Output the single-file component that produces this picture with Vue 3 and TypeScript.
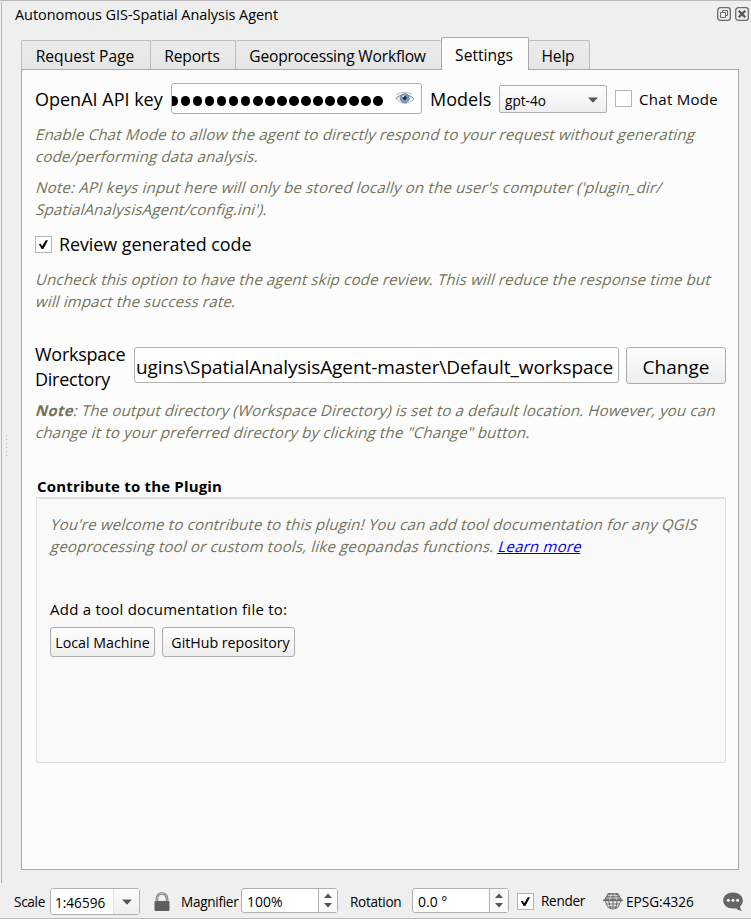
<script setup lang="ts">
import { ref } from 'vue'

interface Tab {
  label: string
  key: string
}

const tabs: Tab[] = [
  { label: 'Request Page', key: 'request' },
  { label: 'Reports', key: 'reports' },
  { label: 'Geoprocessing Workflow', key: 'workflow' },
  { label: 'Settings', key: 'settings' },
  { label: 'Help', key: 'help' },
]
const active = ref<string>('settings')
const chatMode = ref<boolean>(false)
const review = ref<boolean>(true)
const render = ref<boolean>(true)
const maskedLength = 18
</script>

<template>
  <div class="window">
    <div class="dock">
      <div class="grip"><i v-for="n in 6" :key="n"></i></div>
      <div class="dock-main">
        <header class="title">
          <span class="title-text">Autonomous GIS-Spatial Analysis Agent</span>
          <span class="title-icons">
            <svg width="14" height="14" viewBox="0 0 14 14" fill="none" stroke="#6b6b67">
              <rect x=".7" y=".7" width="12.6" height="12.6" rx="2.6" stroke-width="1.3" />
              <path d="M5.5 5V3.5h5v5H9M3.5 5.5h5v5h-5z" />
            </svg>
            <svg width="14" height="14" viewBox="0 0 14 14" fill="none" stroke="#6b6b67">
              <rect x=".7" y=".7" width="12.6" height="12.6" rx="2.6" stroke-width="1.3" />
              <path d="M3.8 3.8l6.4 6.4M10.2 3.8l-6.4 6.4" stroke="#555551" stroke-width="2.3" />
            </svg>
          </span>
        </header>

        <nav class="tabs">
          <button
            v-for="t in tabs"
            :key="t.key"
            :class="['tab', t.key, { active: active === t.key }]"
            @click="active = t.key"
          ><span>{{ t.label }}</span></button>
        </nav>

        <main class="panel">
          <div class="api-row">
            <span class="api-label">OpenAI API key</span>
            <div class="field key-field">
              <span class="dots"><i v-for="n in maskedLength" :key="n"></i></span>
              <svg class="eye" width="20" height="15" viewBox="0 0 20 15">
                <path d="M1 7.8C5 2.6 14 2 19 8c-5 5.800-13 6-18-.2z" fill="#f1f1f1" stroke="#b4b4b4" stroke-width=".8" />
                <path d="M1.500 3.800C6 .6 13 .3 17.500 3.500" fill="none" stroke="#c2bfbc" stroke-width="1.200" />
                <path d="M1 7.500C5 2.600 14 2.300 19 7.800" fill="none" stroke="#8d8d8d" stroke-width="1" />
                <circle cx="9.700" cy="7.200" r="4.500" fill="#7d9dc4" stroke="#5d7ca5" stroke-width=".8" />
                <circle cx="9.700" cy="7" r="2" fill="#1d2636" />
                <circle cx="8.300" cy="5.300" r="1" fill="#dce8f5" />
              </svg>
            </div>
            <span class="models-label">Models</span>
            <div class="combo">
              <span>gpt-4o</span>
              <svg width="10" height="6" viewBox="0 0 10 6"><path d="M0 .5h10L5 5.700z" fill="#555" /></svg>
            </div>
            <label class="check chat" @click="chatMode = !chatMode">
              <span class="box"></span><span class="chat-text">Chat Mode</span>
            </label>
          </div>

          <p class="note n1"><span class="a">Enable Chat Mode to allow the agent to directly respond to your request without generating</span><span class="b">code/performing data analysis.</span></p>
          <p class="note n2"><span class="a">Note: API keys input here will only be stored locally on the user's computer ('plugin_dir/</span><span class="b">SpatialAnalysisAgent/config.ini').</span></p>

          <label class="check review" @click="review = !review">
            <span class="box">
              <svg v-if="review" width="17" height="17" viewBox="0 0 17 17"><path d="M3.200 8.300l2.200-.6 1.500 2.700 4.300-6.700h2.400L8.300 13.700H6.500z" fill="#000" /></svg>
            </span>
            <span>Review generated code</span>
          </label>

          <p class="note n3"><span class="a">Uncheck this option to have the agent skip code review. This will reduce the response time but</span><span class="b">will impact the success rate.</span></p>

          <div class="dir-row">
            <div class="dir-label"><span>Workspace</span><br /><span>Directory</span></div>
            <div class="field dir-field"><span>ugins\SpatialAnalysisAgent-master\Default_workspace</span></div>
            <button class="btn change"><span>Change</span></button>
          </div>

          <p class="note n4"><span class="a"><b>Note</b>: The output directory (Workspace Directory) is set to a default location. However, you can</span><span class="b">change it to your preferred directory by clicking the "Change" button.</span></p>

          <h2>Contribute to the Plugin</h2>
          <section class="group">
            <p class="note n5"><span class="a">You're welcome to contribute to this plugin! You can add tool documentation for any QGIS</span><span class="b">geoprocessing tool or custom tools, like geopandas functions. <a>Learn more</a></span></p>
            <div class="add-label">Add a tool documentation file to:</div>
            <div class="buttons">
              <button class="btn local"><span>Local Machine</span></button>
              <button class="btn github"><span>GitHub repository</span></button>
            </div>
          </section>
        </main>
      </div>
    </div>

    <footer class="status">
      <span class="s-scale">Scale</span>
      <div class="scale-combo">
        <span class="val">1:46596</span>
        <span class="drop"><svg width="10" height="6" viewBox="0 0 10 6"><path d="M0 .5h10L5 5.700z" fill="#555" /></svg></span>
      </div>
      <svg class="lock" width="16" height="20" viewBox="0 0 16 20">
        <path d="M3 11V6.500a5 5 0 0 1 10 0V11" fill="none" stroke="#777" stroke-width="2.600" />
        <path d="M3 11V6.500a5 5 0 0 1 10 0V11" fill="none" stroke="#d9d9d9" stroke-width=".8" />
        <rect x=".5" y="9" width="15" height="10" rx="1" fill="#5f5f5f" />
      </svg>
      <span class="s-mag">Magnifier</span>
      <div class="spin">
        <span class="val">100%</span>
        <span class="arrows"><svg width="8" height="15" viewBox="0 0 8 15"><path d="M0 5h8L4 .5zM0 10h8l-4 4.500z" fill="#555" /></svg></span>
      </div>
      <span class="s-rot">Rotation</span>
      <div class="spin rot">
        <span class="val">0.0 °</span>
        <span class="arrows"><svg width="8" height="15" viewBox="0 0 8 15"><path d="M0 5h8L4 .5zM0 10h8l-4 4.500z" fill="#555" /></svg></span>
      </div>
      <label class="check render" @click="render = !render">
        <span class="box">
          <svg v-if="render" width="17" height="17" viewBox="0 0 17 17"><path d="M3.200 8.300l2.200-.6 1.500 2.700 4.300-6.700h2.400L8.300 13.700H6.500z" fill="#000" /></svg>
        </span>
        <span>Render</span>
      </label>
      <svg class="globe" width="20" height="18" viewBox="0 0 20 18" fill="none" stroke="#707070">
        <path d="M5 1h10l4.500 7.500h-19z" fill="#777" stroke="none" />
        <path d="M2.500 8.500C3 13.500 6 17 10 17s7-3.500 7.500-8.500M10 1v16M7 1C5.500 6 5.500 12 8 17M13 1c1.500 5 1.500 11-1 16M3.500 12h13M5.500 15h9" stroke-width="1.100" />
        <path d="M0 8.500h20" stroke-width="1.400" />
        <path d="M3.500 6h13M5 3.500h10M8.500 1.500C7 4 6.500 6 6.500 8M11.500 1.500C13 4 13.500 6 13.500 8" stroke="#dedede" stroke-width=".8" />
      </svg>
      <span class="s-epsg">EPSG:4326</span>
      <svg class="bubble" width="20" height="19" viewBox="0 0 20 19">
        <path d="M10 .5c5.500 0 9.800 3.400 9.800 8 0 2.500-1 4.500-2.800 5.900.1 1.800.8 3 2 4.100-2.700 0-4.600-.9-5.800-2.300-1 .2-2 .3-3.200.3C4.500 16.500.2 13.100.2 8.500S4.500.5 10 .5z" fill="#646464" />
        <g fill="#fff"><circle cx="5.300" cy="8.300" r="1.500" /><circle cx="10" cy="8.300" r="1.500" /><circle cx="14.700" cy="8.300" r="1.500" /></g>
      </svg>
    </footer>
  </div>
</template>

<style>
body {
  margin: 0;
  background: #efefef;
}
</style>

<style scoped>
* {
  box-sizing: border-box;
}
.window {
  width: 751px;
  height: 919px;
  background: #efefef;
  border-top: 1px solid #b9b9b9;
  border-bottom: 1px solid #b5babf;
  font-family: 'Open Sans', 'Noto Sans', sans-serif;
  color: #000;
  white-space: nowrap;
  overflow: hidden;
  display: flex;
  flex-direction: column;
}
button {
  font-family: inherit;
  color: inherit;
  padding: 0;
  margin: 0;
}
.dock {
  height: 881px;
  margin-top: 1px;
  border-left: 1px solid #b6b6b6;
  margin-left: 1px;
  display: flex;
}
.grip {
  width: 19px;
  padding: 433px 0 0 4px;
  display: flex;
  flex-direction: column;
  gap: 3px;
}
.grip i {
  width: 1px;
  height: 1px;
  background: #a8a8a8;
}
.dock-main {
  width: 718px;
}
.title {
  height: 35px;
  width: 729px;
  display: flex;
  justify-content: space-between;
  padding: 2px 1px 0 0;
}
.title-text {
  margin-left: -6px;
  font-size: 14.5px;
  letter-spacing: -0.06px;
  line-height: 22px;
}
.title-icons {
  display: flex;
  gap: 4px;
  padding-top: 3px;
}
.tabs {
  display: flex;
  align-items: flex-end;
  height: 32px;
}
.tab {
  height: 29px;
  padding-right: 2px;
  border: 1px solid #bcbcbc;
  border-left-width: 0;
  border-bottom: none;
  border-radius: 2px 2px 0 0;
  background: linear-gradient(#ebebeb, #e6e6e6);
  font-size: 15.6px;
  letter-spacing: -0.2px;
  line-height: 30px;
}
.tab.request { width: 130px; border-left-width: 1px; letter-spacing: 0; }
.tab.reports { width: 85px; }
.tab.workflow { width: 205px; border-right: none; }
.tab.settings {
  width: 88px;
  height: 33px;
  border-left-width: 1px;
  border-color: #a9a9a9;
  position: relative;
  margin-bottom: -1px;
  line-height: 34px;
  letter-spacing: 0;
  background: #fcfcfc;
}
.tab.help { width: 61px; }
.panel {
  height: 801px;
  border: 1px solid #a9a9a9;
  background: #fcfcfc;
  padding: 13px 0 0 13px;
}
.api-row {
  display: flex;
  align-items: flex-start;
}
.api-label {
  width: 136px;
  font-size: 18px;
  line-height: 33px;
}
.field {
  background: #fff;
  border: 1px solid #b0b0b0;
  border-radius: 3px;
  overflow: hidden;
  display: flex;
  align-items: center;
}
.key-field {
  width: 251px;
  height: 31px;
}
.dots {
  display: flex;
  gap: 2.640px;
  margin: 5px 0 0 -3px;
}
.dots i {
  flex: none;
  width: 9.400px;
  height: 9.400px;
  border-radius: 50%;
  background: #000;
}
.eye {
  flex: none;
  margin-left: 12px;
}
.models-label {
  width: 77px;
  padding-left: 8px;
  font-size: 18px;
  line-height: 33px;
}
.combo {
  width: 108px;
  height: 28px;
  margin-top: 2px;
  border: 1px solid #b0b0b0;
  border-radius: 2px;
  background: linear-gradient(#fdfdfd, #efefef);
  display: flex;
  align-items: center;
  justify-content: space-between;
  padding: 2px 8px 0 5px;
  font-size: 13.6px;
}
.check {
  display: flex;
  align-items: center;
}
.box {
  flex: none;
  width: 17px;
  height: 17px;
  border: 1px solid #b4b4b4;
  background: #fff;
  display: flex;
  align-items: center;
  justify-content: center;
}
.chat {
  margin: 4px 0 0 8px;
  gap: 7px;
  font-size: 15px;
  letter-spacing: 0.3px;
  line-height: 22px;
}
.chat-text {
  line-height: 20px;
  padding-top: 2px;
}
.note {
  margin: 0;
  font-size: 15px;
  line-height: 22px;
  letter-spacing: 0.21px;
  color: #73735a;
}
.note .a,
.note .b {
  display: block;
  width: max-content;
  transform: skewX(-16deg);
  transform-origin: 0 75%;
}
.n1 { margin-top: 7px; }
.n2 { margin-top: 8.500px; line-height: 22.500px; }
.review {
  margin-top: 10.500px;
  gap: 7px;
  font-size: 17.900px;
  letter-spacing: -0.050px;
  line-height: 26px;
}
.n3 { margin-top: 11px; letter-spacing: 0.18px; }
.dir-row {
  margin-top: 30px;
  display: flex;
  align-items: flex-start;
}
.dir-label {
  width: 99px;
  font-size: 18px;
  letter-spacing: -0.250px;
  line-height: 25px;
}
.dir-field {
  margin-top: 5px;
  width: 485px;
  height: 36px;
  padding: 4px 0 0 1px;
  font-size: 19px;
  letter-spacing: -0.060px;
}
.btn {
  border: 1px solid #acacac;
  border-radius: 3px;
  background: linear-gradient(#fefefe, #eeeeee);
}
.change {
  margin: 5px 0 0 7px;
  width: 100px;
  height: 37px;
  padding-top: 2px;
  font-size: 19px;
}
.n4 { margin-top: 7px; letter-spacing: 0.190px; }
h2 {
  margin: 32px 0 0 2px;
  font-size: 15px;
  letter-spacing: 0.18px;
  line-height: 22px;
}
.group {
  margin: 0 0 0 1px;
  width: 690px;
  height: 266px;
  border: 1px solid #dedede;
  border-top-width: 2px;
  border-radius: 2px;
  background: #f9f9f9;
  padding: 14px 13px;
}
.note a {
  color: #0000e6;
  text-decoration: underline;
}
.add-label {
  margin-top: 41px;
  font-size: 15px;
  letter-spacing: 0.240px;
  line-height: 22px;
}
.buttons {
  display: flex;
  gap: 7px;
  margin-top: 7px;
}
.buttons .btn {
  height: 30px;
  font-size: 14.200px;
}
.local { width: 105px; }
.github { width: 133px; padding-left: 4px; }
.status {
  flex: 1;
  display: flex;
  align-items: flex-start;
  padding: 5px 8px 0 13px;
  font-size: 13.600px;
  letter-spacing: -0.300px;
  line-height: 27px;
}
.s-scale { width: 37px; padding-left: 1px; }
.scale-combo,
.spin {
  height: 27px;
  border: 1px solid #b0b0b0;
  border-radius: 3px;
  background: #fff;
  display: flex;
  justify-content: space-between;
  letter-spacing: 0;
}
.scale-combo { width: 90px; }
.scale-combo .val { padding-left: 4px; }
.drop {
  width: 26px;
  border-left: 1px solid #e2e2e2;
  background: linear-gradient(#fdfdfd, #efefef);
  display: flex;
  align-items: center;
  justify-content: center;
}
.lock { margin: 4px 11px 0 14px; }
.s-mag { width: 60px; }
.spin {
  width: 97px;
  height: 25px;
  font-size: 14px;
}
.spin .val { padding-left: 5px; line-height: 26px; }
.arrows {
  width: 19px;
  border-left: 1px solid #b0b0b0;
  background: #fafafa;
  display: flex;
  align-items: center;
  justify-content: center;
}
.s-rot { width: 74px; padding-left: 12px; }
.render {
  margin: 4px 0 0 8px;
  gap: 7px;
  line-height: 18px;
  width: 79px;
}
.globe { margin: 4px 0 0 7px; }
.s-epsg { padding-left: 3px; letter-spacing: 0; }
.bubble { margin: 4px 0 0 auto; }
</style>
